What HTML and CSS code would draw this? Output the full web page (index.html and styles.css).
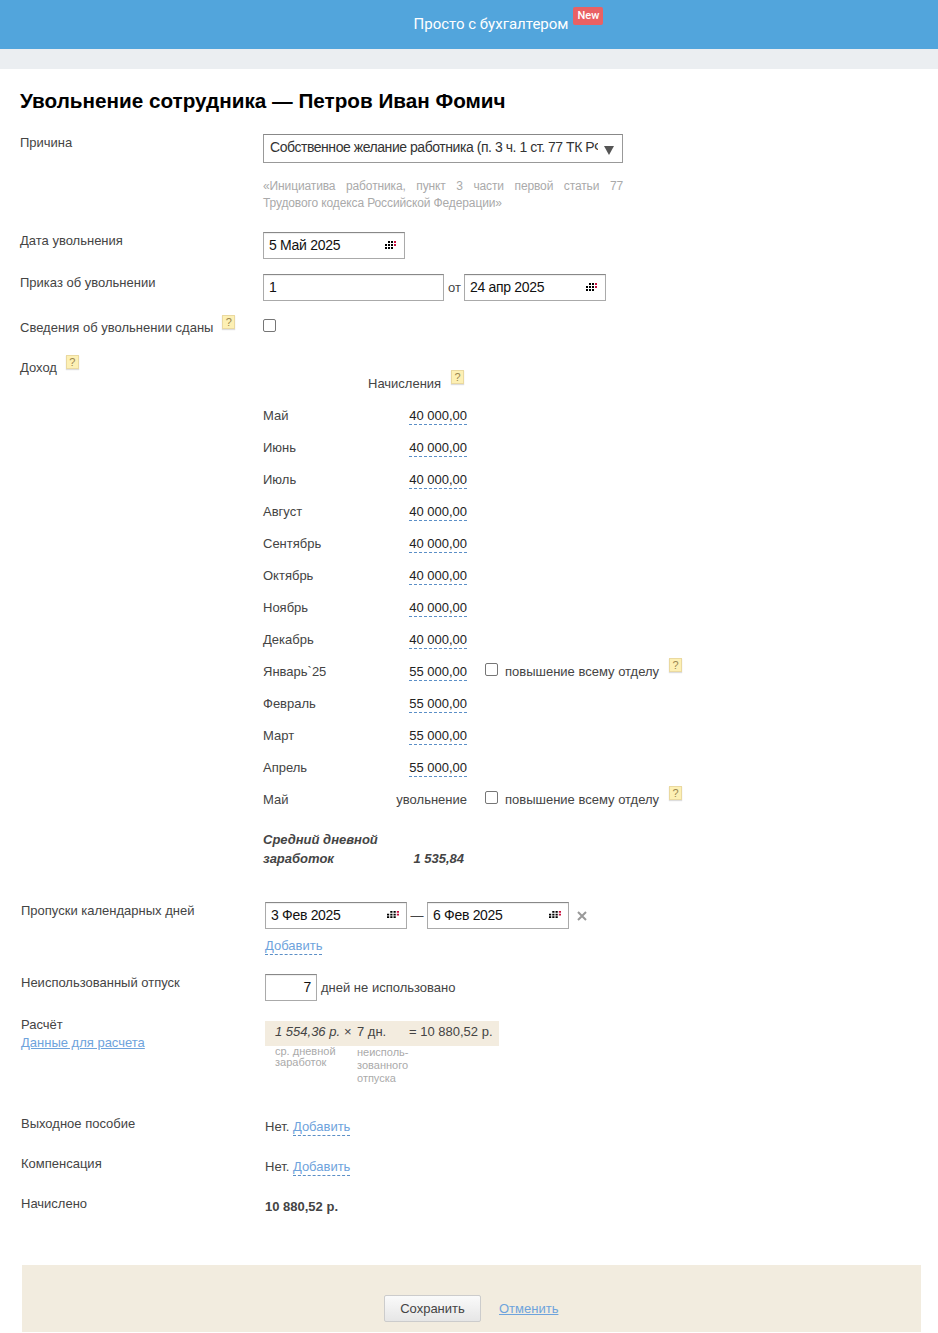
FILE: index.html
```html
<!DOCTYPE html>
<html lang="ru">
<head>
<meta charset="utf-8">
<title>Увольнение сотрудника</title>
<link rel="stylesheet" href="styles.css">
</head>
<body>
<svg class="sprites" width="0" height="0" aria-hidden="true">
  <symbol id="cal" viewBox="0 0 11 8" preserveAspectRatio="none">
    <path fill="#000" d="M6 0h2v2H6zM3 3h2v2H3zM6 3h2v2H6zM3 6h2v2H3zM0 6h2v2H0zM6 6h2v2H6zM0 3h2v2H0zM3 0h2v2H3z"/>
    <path fill="#c8103f" d="M9 0h2v2H9zM9 3h2v2H9z"/>
  </symbol>
</svg>
<header class="topbar">
  <span class="topbar-link">Просто с бухгалтером</span>
  <span class="new-badge">New</span>
</header>
<div class="subbar"></div>
<main class="page">
  <h1 class="title">Увольнение сотрудника — Петров Иван Фомич</h1>

  <section class="row row-reason">
    <div class="label">Причина</div>
    <div class="control">
      <div class="select"><span class="select-text">Собственное желание работника (п. 3 ч. 1 ст. 77 ТК РФ)</span><span class="select-arrow"></span></div>
      <p class="hint">«Инициатива работника, пункт 3 части первой статьи 77 Трудового кодекса Российской Федерации»</p>
    </div>
  </section>

  <section class="row row-date">
    <div class="label">Дата увольнения</div>
    <div class="control">
      <div class="input date date-main">5 Май 2025<svg class="cal"><use href="#cal"/></svg></div>
    </div>
  </section>

  <section class="row row-order">
    <div class="label">Приказ об увольнении</div>
    <div class="control inline">
      <div class="input order-number">1</div>
      <span class="from">от</span>
      <div class="input date date-order">24 апр 2025<svg class="cal"><use href="#cal"/></svg></div>
    </div>
  </section>

  <section class="row row-info">
    <div class="label">Сведения об увольнении сданы<span class="help help-info">?</span></div>
    <div class="control"><span class="check"></span></div>
  </section>

  <section class="row row-income">
    <div class="label">Доход<span class="help help-income">?</span></div>
    <div class="control">
      <div class="income-head">Начисления<span class="help help-head">?</span></div>
      <div class="income-row"><span class="month">Май</span><span class="amount"><span class="dashed">40 000,00</span></span></div>
      <div class="income-row"><span class="month">Июнь</span><span class="amount"><span class="dashed">40 000,00</span></span></div>
      <div class="income-row"><span class="month">Июль</span><span class="amount"><span class="dashed">40 000,00</span></span></div>
      <div class="income-row"><span class="month">Август</span><span class="amount"><span class="dashed">40 000,00</span></span></div>
      <div class="income-row"><span class="month">Сентябрь</span><span class="amount"><span class="dashed">40 000,00</span></span></div>
      <div class="income-row"><span class="month">Октябрь</span><span class="amount"><span class="dashed">40 000,00</span></span></div>
      <div class="income-row"><span class="month">Ноябрь</span><span class="amount"><span class="dashed">40 000,00</span></span></div>
      <div class="income-row"><span class="month">Декабрь</span><span class="amount"><span class="dashed">40 000,00</span></span></div>
      <div class="income-row"><span class="month">Январь`25</span><span class="amount"><span class="dashed">55 000,00</span></span><span class="check check-raise"></span><span class="raise">повышение всему отделу</span><span class="help help-raise">?</span></div>
      <div class="income-row"><span class="month">Февраль</span><span class="amount"><span class="dashed">55 000,00</span></span></div>
      <div class="income-row"><span class="month">Март</span><span class="amount"><span class="dashed">55 000,00</span></span></div>
      <div class="income-row"><span class="month">Апрель</span><span class="amount"><span class="dashed">55 000,00</span></span></div>
      <div class="income-row"><span class="month">Май</span><span class="amount amount-plain">увольнение</span><span class="check check-raise"></span><span class="raise">повышение всему отделу</span><span class="help help-raise">?</span></div>
      <div class="average"><span class="average-label">Средний дневной заработок</span><span class="average-value">1 535,84</span></div>
    </div>
  </section>

  <div class="lower">
    <section class="row row-skips">
      <div class="label">Пропуски календарных дней</div>
      <div class="control">
        <div class="inline">
          <div class="input date date-skip">3 Фев 2025<svg class="cal"><use href="#cal"/></svg></div>
          <span class="dash">—</span>
          <div class="input date date-skip">6 Фев 2025<svg class="cal"><use href="#cal"/></svg></div>
          <svg class="remove" viewBox="0 0 10 10"><path d="M1 1l8 8M9 1L1 9"/></svg>
        </div>
        <a class="link-dashed add-skip">Добавить</a>
      </div>
    </section>

    <section class="row row-unused">
      <div class="label">Неиспользованный отпуск</div>
      <div class="control inline">
        <div class="input days">7</div>
        <span class="days-text">дней не использовано</span>
      </div>
    </section>

    <section class="row row-calc">
      <div class="label">Расчёт<br><a class="link">Данные для расчета</a></div>
      <div class="control">
        <div class="calc-bar"><span class="calc-rate">1 554,36 р.</span><span class="calc-times">×</span><span class="calc-days">7 дн.</span><span class="calc-total">= 10 880,52 р.</span></div>
        <div class="calc-notes"><span class="note note-rate">ср. дневной заработок</span><span class="note note-days">неисполь-<br>зованного<br>отпуска</span></div>
      </div>
    </section>

    <section class="row row-plain row-severance">
      <div class="label">Выходное пособие</div>
      <div class="control value">Нет. <a class="link-dashed">Добавить</a></div>
    </section>
    <section class="row row-plain">
      <div class="label">Компенсация</div>
      <div class="control value">Нет. <a class="link-dashed">Добавить</a></div>
    </section>
    <section class="row row-plain">
      <div class="label">Начислено</div>
      <div class="control value"><b>10 880,52 р.</b></div>
    </section>

    <footer class="actions">
      <button class="save" type="button">Сохранить</button>
      <a class="link cancel">Отменить</a>
    </footer>
  </div>
</main>
</body>
</html>
```
FILE: styles.css
```css
* { box-sizing: border-box; }
html, body { margin: 0; padding: 0; background: #fff; }
body { font-family: "Liberation Sans", Arial, sans-serif; font-size: 13px; line-height: 18px; color: #444; overflow: hidden; height: 1333px; }
.sprites { position: absolute; }
a { cursor: pointer; }

.topbar { height: 49px; background: #52a5dc; display: flex; justify-content: center; align-items: flex-start; color: #fff; font-family: Roboto, sans-serif; }
.topbar-link { font-size: 15px; line-height: 20px; margin-top: 14px; margin-left: 79px; }
.new-badge { background: #e96164; color: #fff; font-size: 11px; font-weight: 500; line-height: 17px; height: 18px; width: 30px; text-align: center; border-radius: 2px; margin: 7px 0 0 5px; }
.subbar { height: 20px; background: #ebeef1; }

.page { padding: 0 17px 0 20px; }
.title { margin: 0; padding-top: 19px; font-size: 20.7px; line-height: 25px; font-weight: 700; color: #000; }

.row { display: grid; grid-template-columns: 243px 1fr; }
.label { white-space: nowrap; }
.inline { display: flex; align-items: flex-start; }

.row-reason { margin-top: 21px; }
.select { width: 360px; height: 29px; border: 1px solid #999; border-top-color: #888; padding: 3px 6px; display: flex; color: #333; font-size: 14px; letter-spacing: -0.45px; white-space: nowrap; }
.select-text { width: 328px; overflow: hidden; }
.select-arrow { width: 0; height: 0; margin: 8px 0 0 6px; border: 5.5px solid transparent; border-top: 9px solid #555; border-bottom: 0; }
.hint { margin: 15px 0 0; width: 360px; color: #aaa; font-size: 12px; letter-spacing: -0.12px; line-height: 17px; text-align: justify; }

.input { border: 1px solid #aaa; border-top-color: #888; background: #fff; color: #111; font-size: 14px; letter-spacing: -0.3px; line-height: 24px; padding-left: 5px; height: 27px; box-shadow: inset 0 1px 1px #eee; position: relative; }
.cal { position: absolute; right: 8px; top: 8px; width: 11px; height: 8px; }
.date-skip .cal { right: 7px; width: 12px; height: 7px; }

.row-date { margin-top: 20px; }
.date-main { width: 142px; }
.row-order { margin-top: 15px; }
.order-number { width: 181px; }
.from { margin: 5px 3px 0 4px; }
.date-order { width: 142px; }

.row-info { margin-top: 18px; }
.help { display: inline-block; width: 13px; height: 14px; background: #fdf0b4; border: 1px solid #ead9a0; box-shadow: 0 1px 1px #ddd; color: #9a8650; font-size: 11px; line-height: 12px; text-align: center; vertical-align: top; }
.help-info { margin: -4px 0 0 9px; }
.check { display: inline-block; width: 13px; height: 13px; border: 1px solid #767676; border-radius: 2px; background: #fff; }
.row-info .check { margin-top: -1px; }

.row-income { margin-top: 22px; }
.help-income { margin: -4px 0 0 9px; }
.income-head { margin-top: 16px; padding-left: 105px; }
.help-head { margin: -5px 0 0 10px; }
.income-row { display: flex; height: 32px; align-items: flex-start; padding-top: 14px; }
.month { width: 104px; }
.amount { width: 100px; text-align: right; color: #222; }
.amount-plain { color: #444; }
.dashed { border-bottom: 1px dashed #5b8fc7; display: inline-block; line-height: 17px; }
.check-raise { margin: 0 0 0 18px; }
.raise { margin-left: 7px; }
.help-raise { margin: -5px 0 0 10px; }
.average { display: flex; align-items: flex-end; font-weight: 700; font-style: italic; margin-top: 21px; line-height: 19px; color: #444; }
.average-label { width: 130px; }
.average-value { width: 71px; text-align: right; }

.lower { padding-left: 2px; margin-top: 34px; }
.lower .label { margin-left: -1px; }
.date-skip { width: 142px; }
.dash { width: 20px; text-align: center; margin-top: 5px; }
.remove { width: 10px; height: 10px; margin: 9px 0 0 8px; fill: none; stroke: #999; stroke-width: 2; }
.link-dashed { color: #6ea3dc; border-bottom: 1px dashed #5b8fc7; display: inline-block; line-height: 16px; }
.add-skip { margin-top: 9px; }

.row-unused { margin-top: 19px; }
.days { width: 52px; height: 27px; text-align: right; padding: 0 5px 0 0; }
.days-text { margin: 5px 0 0 4px; }

.row-calc { margin-top: 20px; }
.link { color: #6ea3dc; text-decoration: underline; }
.row-calc .label { margin-top: -5px; }
.calc-bar { width: 234px; height: 25px; background: #f3ecdf; display: flex; align-items: center; padding: 0 0 3px 10px; }
.calc-rate { font-style: italic; width: 69px; }
.calc-times { width: 13px; }
.calc-days { width: 52px; }
.calc-total { white-space: nowrap; }
.calc-notes { display: flex; font-size: 11px; line-height: 13px; color: #aaa; padding-left: 10px; margin-top: -1px; }
.note-rate { width: 82px; line-height: 11px; padding-right: 15px; margin-top: 1px; }
.note-days { margin-top: 1px; }

.row-plain { margin-top: 22px; }
.row-severance { margin-top: 33px; }
.row-plain .label { margin-top: -3px; }
.actions { margin-top: 49px; height: 67px; background: #f2ecdf; width: 899px; display: flex; align-items: flex-start; padding: 30px 0 0 362px; }
.save { width: 97px; height: 27px; border: 1px solid #ccc; border-radius: 2px; background: linear-gradient(#fafafa, #e6e6e6); font: 13px/18px "Liberation Sans", Arial, sans-serif; color: #444; padding: 0; }
.cancel { margin: 5px 0 0 18px; }
```
